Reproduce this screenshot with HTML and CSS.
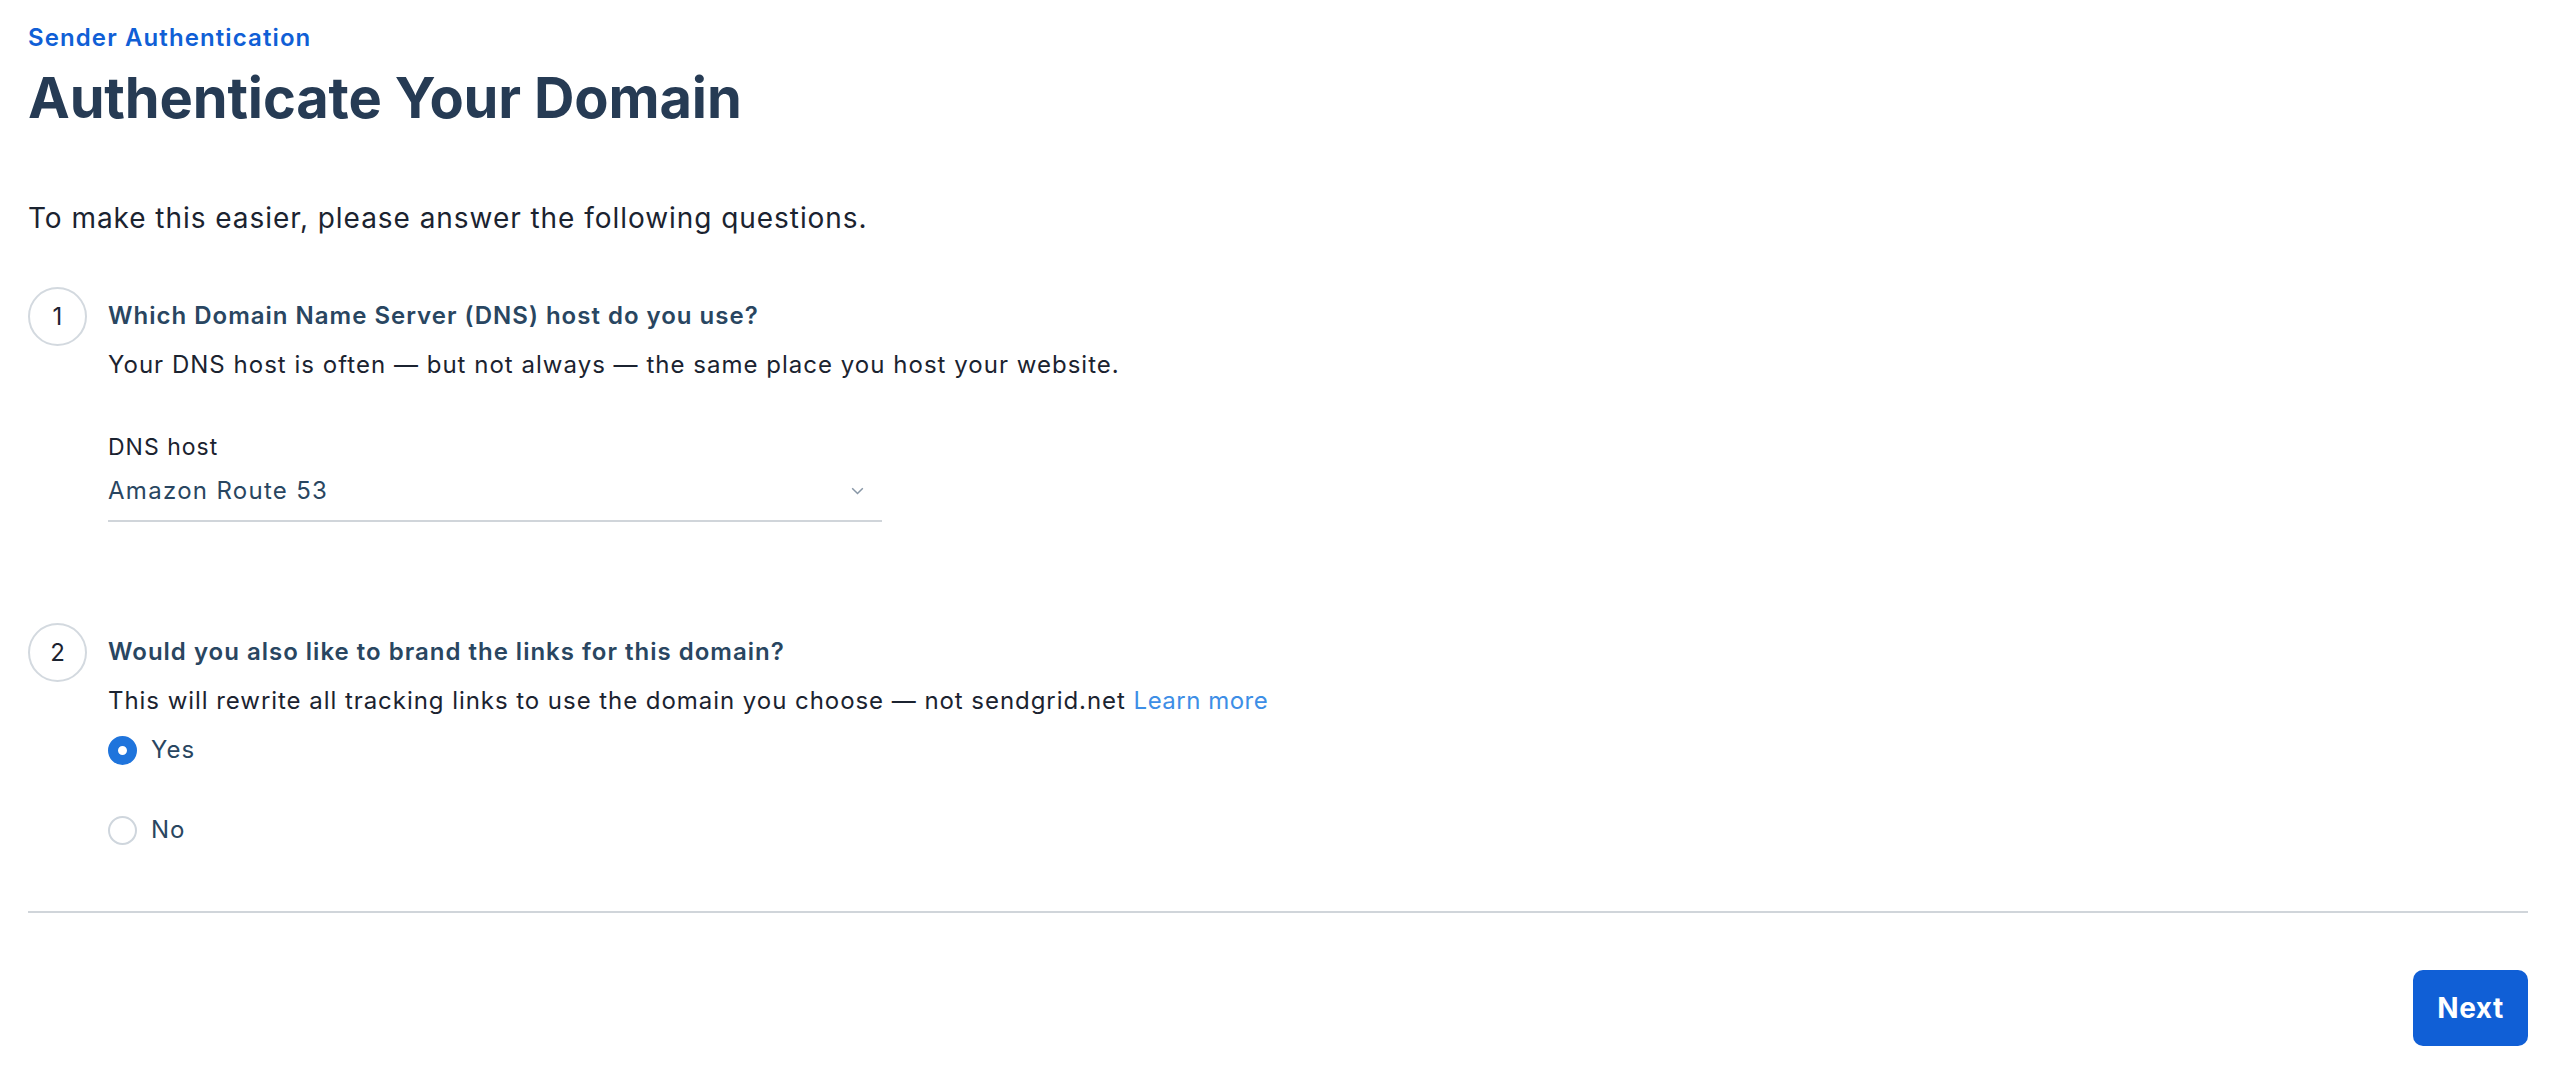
FILE: index.html
```html
<!DOCTYPE html>
<html lang="en">
<head>
<meta charset="utf-8">
<title>Authenticate Your Domain</title>
<link rel="stylesheet" href="styles.css">
</head>
<body>
<div class="page">
  <div class="eyebrow">Sender Authentication</div>
  <h1 class="title">Authenticate Your Domain</h1>
  <p class="intro">To make this easier, please answer the following questions.</p>

  <div class="step">
    <div class="step-num">1</div>
    <div class="step-body">
      <div class="step-title">Which Domain Name Server (DNS) host do you use?</div>
      <div class="step-desc">Your DNS host is often — but not always — the same place you host your website.</div>
      <div class="field">
        <div class="field-label">DNS host</div>
        <div class="select">
          <span class="select-value">Amazon Route 53</span>
          <svg class="chevron" width="13" height="8" viewBox="0 0 13 8"><path d="M1.2 1.2 L6.5 6.5 L11.8 1.2" fill="none" stroke="#8796a6" stroke-width="1.5"/></svg>
        </div>
      </div>
    </div>
  </div>

  <div class="step step-two">
    <div class="step-num">2</div>
    <div class="step-body">
      <div class="step-title">Would you also like to brand the links for this domain?</div>
      <div class="step-desc step-desc-two">This will rewrite all tracking links to use the domain you choose — not sendgrid.net <a class="link" href="#">Learn more</a></div>
      <div class="radios">
        <label class="radio"><span class="radio-dot checked"></span><span class="radio-text">Yes</span></label>
        <label class="radio"><span class="radio-dot"></span><span class="radio-text">No</span></label>
      </div>
    </div>
  </div>

  <div class="divider"></div>
  <div class="actions">
    <button class="btn-next">Next</button>
  </div>
</div>
</body>
</html>
```

FILE: styles.css
```css
html, body {
  margin: 0;
  padding: 0;
  background: #ffffff;
}
body {
  font-family: Inter, "Noto Sans", "Liberation Sans", sans-serif;
  color: #1b2330;
  letter-spacing: 1px;
}
.page {
  padding: 23px 34px 0 28px;
}
.eyebrow {
  font-size: 24px;
  line-height: 30px;
  font-weight: 600;
  color: #105fd6;
  letter-spacing: 1.1px;
}
.title {
  margin: 11px 0 0 0;
  font-size: 56px;
  line-height: 68px;
  font-weight: 700;
  letter-spacing: -0.15px;
  color: #263b54;
}
.intro {
  margin: 66px 0 0 0;
  font-size: 28px;
  line-height: 40px;
  color: #1b2330;
  letter-spacing: 0.95px;
}
.step {
  display: flex;
  align-items: flex-start;
  gap: 21px;
  margin-top: 49px;
}
.step-two {
  margin-top: 101px;
}
.step-num {
  flex: none;
  width: 55px;
  height: 55px;
  border: 2px solid #d3d9df;
  border-radius: 50%;
  display: flex;
  align-items: center;
  justify-content: center;
  font-size: 24px;
  letter-spacing: 0;
  color: #1b2330;
}
.step-body {
  padding-top: 13px;
}
.step-title {
  font-size: 24px;
  line-height: 32px;
  font-weight: 600;
  color: #294661;
  letter-spacing: 1px;
}
.step-desc {
  margin-top: 17px;
  font-size: 24px;
  line-height: 32px;
  color: #1b2330;
  letter-spacing: 1.02px;
}
.step-desc-two {
  letter-spacing: 0.95px;
}
.field {
  margin-top: 50px;
  width: 774px;
}
.field-label {
  font-size: 23px;
  line-height: 32px;
  color: #1b2330;
}
.select {
  margin-top: 12px;
  display: flex;
  align-items: center;
  justify-content: space-between;
  padding-bottom: 13px;
  border-bottom: 2px solid #d0d5da;
}
.select-value {
  font-size: 24px;
  line-height: 32px;
  color: #294661;
  letter-spacing: 1.3px;
}
.chevron {
  margin-right: 18px;
}
.link {
  color: #3d8ee6;
  text-decoration: none;
  letter-spacing: 0.5px;
}
.radios {
  margin-top: 17px;
  display: flex;
  flex-direction: column;
  gap: 48px;
}
.radio {
  display: flex;
  align-items: center;
  gap: 14px;
  height: 32px;
}
.radio-dot {
  box-sizing: border-box;
  width: 29px;
  height: 29px;
  border-radius: 50%;
  border: 2px solid #cfd6dd;
  background: #fff;
}
.radio-dot.checked {
  border: 10px solid #1f74dc;
  background: #ffffff;
}
.radio-text {
  font-size: 24px;
  line-height: 32px;
  color: #294661;
}
.divider {
  margin-top: 65px;
  height: 2px;
  background: #d0d5da;
}
.actions {
  display: flex;
  justify-content: flex-end;
  margin-top: 57px;
}
.btn-next {
  width: 115px;
  height: 76px;
  border: none;
  border-radius: 10px;
  background: #105fd6;
  color: #ffffff;
  font-family: Inter, "Noto Sans", sans-serif;
  font-size: 28px;
  font-weight: 700;
  letter-spacing: 0.5px;
  cursor: pointer;
}
```
